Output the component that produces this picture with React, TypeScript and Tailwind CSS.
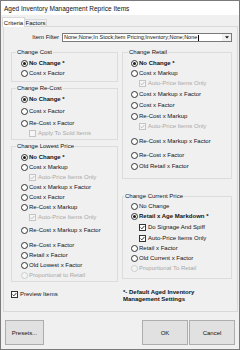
import React from "react";

type Item = {
  kind: "radio" | "check";
  label: string;
  checked?: boolean;
  disabled?: boolean;
  bold?: boolean;
  indent?: boolean;
  mt: string;
};

const Radio = ({ checked, disabled }: { checked?: boolean; disabled?: boolean }) => (
  <span
    className={`flex h-[7px] w-[7px] shrink-0 items-center justify-center rounded-full border ${
      disabled ? "border-[#cccccc] bg-[#f4f4f4]" : "border-[#333333] bg-white"
    }`}
  >
    {checked && <span className="h-[3px] w-[3px] rounded-full bg-[#1a1a1a]" />}
  </span>
);

const Check = ({ checked, disabled }: { checked?: boolean; disabled?: boolean }) => (
  <span
    className={`flex h-[7px] w-[7px] shrink-0 items-center justify-center border ${
      disabled ? "border-[#c4c4c4] bg-[#f6f6f6]" : "border-[#333333] bg-white"
    }`}
  >
    {checked && (
      <svg viewBox="0 0 5 5" className="h-[5px] w-[5px]">
        <path
          d="M0.6 2.5 L1.9 3.8 L4.4 1"
          fill="none"
          stroke={disabled ? "#b4b4b4" : "#1a1a1a"}
          strokeWidth="0.9"
        />
      </svg>
    )}
  </span>
);

const RowView = ({ item }: { item: Item }) => (
  <div className={`flex h-[10px] items-center ${item.mt} ${item.indent ? "ml-[8px]" : ""}`}>
    {item.kind === "radio" ? (
      <Radio checked={item.checked} disabled={item.disabled} />
    ) : (
      <Check checked={item.checked} disabled={item.disabled} />
    )}
    <span
      className={`whitespace-nowrap leading-[10px] ${item.kind === "radio" ? "ml-[1px]" : "ml-[2px]"} ${
        item.bold ? "font-bold" : ""
      } ${item.disabled ? "text-[#a8a8a8]" : "text-[#111111]"}`}
    >
      {item.label}
    </span>
  </div>
);

const Group = ({
  title,
  box,
  titlePos,
  pad,
  items,
}: {
  title: string;
  box: string;
  titlePos: string;
  pad: string;
  items: Item[];
}) => (
  <div className={`relative border border-[#dcdcdc] ${box}`}>
    <span className={`absolute top-[-5px] ${titlePos} bg-[#f0f0f0] px-[1px] leading-[9px] whitespace-nowrap`}>
      {title}
    </span>
    <div className={`flex flex-col ${pad}`}>
      {items.map((it, i) => (
        <RowView key={i} item={it} />
      ))}
    </div>
  </div>
);

const costItems: Item[] = [
  { kind: "radio", label: "No Change *", checked: true, bold: true, mt: "mt-[5px]" },
  { kind: "radio", label: "Cost x Factor", mt: "mt-0" },
];

const reCostItems: Item[] = [
  { kind: "radio", label: "No Change *", checked: true, bold: true, mt: "mt-[5px]" },
  { kind: "radio", label: "Cost x Factor", mt: "mt-[2px]" },
  { kind: "radio", label: "Re-Cost x Factor", mt: "mt-[2px]" },
  { kind: "check", label: "Apply To Sold Items", disabled: true, indent: true, mt: "mt-0" },
];

const lowestItems: Item[] = [
  { kind: "radio", label: "No Change *", checked: true, bold: true, mt: "mt-[5px]" },
  { kind: "radio", label: "Cost x Markup", mt: "mt-0" },
  { kind: "check", label: "Auto-Price Items Only", checked: true, disabled: true, indent: true, mt: "mt-0" },
  { kind: "radio", label: "Cost x Markup x Factor", mt: "mt-0" },
  { kind: "radio", label: "Cost x Factor", mt: "mt-0" },
  { kind: "radio", label: "Re-Cost x Markup", mt: "mt-0" },
  { kind: "check", label: "Auto-Price Items Only", checked: true, disabled: true, indent: true, mt: "mt-0" },
  { kind: "radio", label: "Re-Cost x Markup x Factor", mt: "mt-[3px]" },
  { kind: "radio", label: "Re-Cost x Factor", mt: "mt-[5px]" },
  { kind: "radio", label: "Retail x Factor", mt: "mt-0" },
  { kind: "radio", label: "Old Lowest x Factor", mt: "mt-0" },
  { kind: "radio", label: "Proportional to Retail", disabled: true, mt: "mt-0" },
];

const retailItems: Item[] = [
  { kind: "radio", label: "No Change *", checked: true, bold: true, mt: "mt-[5px]" },
  { kind: "radio", label: "Cost x Markup", mt: "mt-0" },
  { kind: "check", label: "Auto-Price Items Only", checked: true, disabled: true, indent: true, mt: "mt-0" },
  { kind: "radio", label: "Cost x Markup x Factor", mt: "mt-[1px]" },
  { kind: "radio", label: "Cost x Factor", mt: "mt-[1px]" },
  { kind: "radio", label: "Re-Cost x Markup", mt: "mt-[1px]" },
  { kind: "check", label: "Auto-Price Items Only", checked: true, disabled: true, indent: true, mt: "mt-0" },
  { kind: "radio", label: "Re-Cost x Markup x Factor", mt: "mt-[5px]" },
  { kind: "radio", label: "Re-Cost x Factor", mt: "mt-[4px]" },
  { kind: "radio", label: "Old Retail x Factor", mt: "mt-[1px]" },
];

const currentItems: Item[] = [
  { kind: "radio", label: "No Change", mt: "mt-[4px]" },
  { kind: "radio", label: "Retail x Age Markdown *", checked: true, bold: true, mt: "mt-0" },
  { kind: "check", label: "Do Signage And Spiff", checked: true, indent: true, mt: "mt-[1px]" },
  { kind: "check", label: "Auto-Price Items Only", checked: true, indent: true, mt: "mt-[1px]" },
  { kind: "radio", label: "Retail x Factor", mt: "mt-0" },
  { kind: "radio", label: "Old Current x Factor", mt: "mt-0" },
  { kind: "radio", label: "Proportional To Retail", disabled: true, mt: "mt-0" },
];

export default function App() {
  return (
    <div className="flex h-[350px] w-[240px] flex-col overflow-hidden border border-[#7a7a7a] bg-[#f0f0f0] font-['Liberation_Sans',Arial,sans-serif] text-[6px] text-[#111111]">
      {/* title bar */}
      <div className="flex h-[14px] shrink-0 items-center bg-white pl-[3px] pt-[1px] text-[6.5px] leading-[8px] whitespace-nowrap">
        Aged Inventory Management Reprice Items
      </div>

      {/* tabs */}
      <div className="flex h-[11px] shrink-0 items-end pl-[1px]">
        <div className="relative z-10 mb-[-1px] flex h-[10px] w-[23px] items-center justify-center border border-b-0 border-[#d9d9d9] bg-white leading-[8px]">
          Criteria
        </div>
        <div className="flex h-[7px] w-[22px] items-center justify-center border border-b-0 border-l-0 border-[#d9d9d9] bg-[#f0f0f0] leading-[7px]">
          Factors
        </div>
      </div>

      {/* tab page */}
      <div className="ml-[2px] flex h-[286px] w-[235px] shrink-0 flex-col border border-[#d9d9d9] bg-[#f0f0f0]">
        <div className="mt-[6px] flex h-[9px] items-center">
          <span className="w-[55px] text-right leading-[9px]">Item Filter</span>
          <div className="relative ml-[3px] flex h-[9px] w-[170px] items-center border border-[#7a7a7a] bg-white pl-[1px]">
            <span className="text-[5.5px] whitespace-nowrap leading-[7px]">None;None;In Stock;Item Pricing;Inventory;None;None</span>
            <span className="ml-[0.5px] h-[6px] w-[1px] bg-black" />
            <span className="absolute top-0 right-0 bottom-0 flex w-[9px] items-center justify-center bg-[#f0f0f0]">
              <svg viewBox="0 0 6 5" className="h-[5px] w-[6px]">
                <path d="M1 1.2 L5 1.2 L3 3.6 Z" fill="#111" />
              </svg>
            </span>
          </div>
        </div>

        <div className="mt-[10px] grid grid-cols-[107px_110px] gap-x-[4px] pl-[7px]">
          <div className="flex flex-col">
            <Group title="Change Cost" box="h-[30px]" titlePos="left-[4px]" pad="pl-[9px]" items={costItems} />
            <Group title="Change Re-Cost" box="mt-[6px] h-[52px]" titlePos="left-[4px]" pad="pl-[9px]" items={reCostItems} />
            <Group title="Change Lowest Price" box="mt-[6px] h-[136px]" titlePos="left-[4px]" pad="pl-[9px]" items={lowestItems} />
            <div className="mt-[7px] flex h-[10px] items-center">
              <Check checked />
              <span className="ml-[2px] leading-[10px]">Preview Items</span>
            </div>
          </div>
          <div className="flex flex-col">
            <Group title="Change Retail" box="h-[127px]" titlePos="left-[5px]" pad="pl-[8px]" items={retailItems} />
            <Group title="Change Current Price" box="mt-[17px] h-[83px]" titlePos="left-[1px]" pad="pl-[8px]" items={currentItems} />
            <div className="mt-[10px] pl-[1px] font-bold leading-[7px]">
              *- Default Aged Inventory
              <br />
              Management Settings
            </div>
          </div>
        </div>
      </div>

      {/* buttons */}
      <div className="mt-[8px] flex h-[25px] shrink-0 pr-[4px] pl-[4px]">
        <button className="flex h-[25px] w-[39px] items-center justify-center border border-[#adadad] bg-[#e1e1e1] leading-[8px]">
          Presets...
        </button>
        <button className="ml-auto flex h-[25px] w-[46px] items-center justify-center border border-[#adadad] bg-[#e1e1e1] leading-[8px]">
          OK
        </button>
        <button className="ml-[1px] flex h-[25px] w-[46px] items-center justify-center border border-[#adadad] bg-[#e1e1e1] leading-[8px]">
          Cancel
        </button>
      </div>
    </div>
  );
}
